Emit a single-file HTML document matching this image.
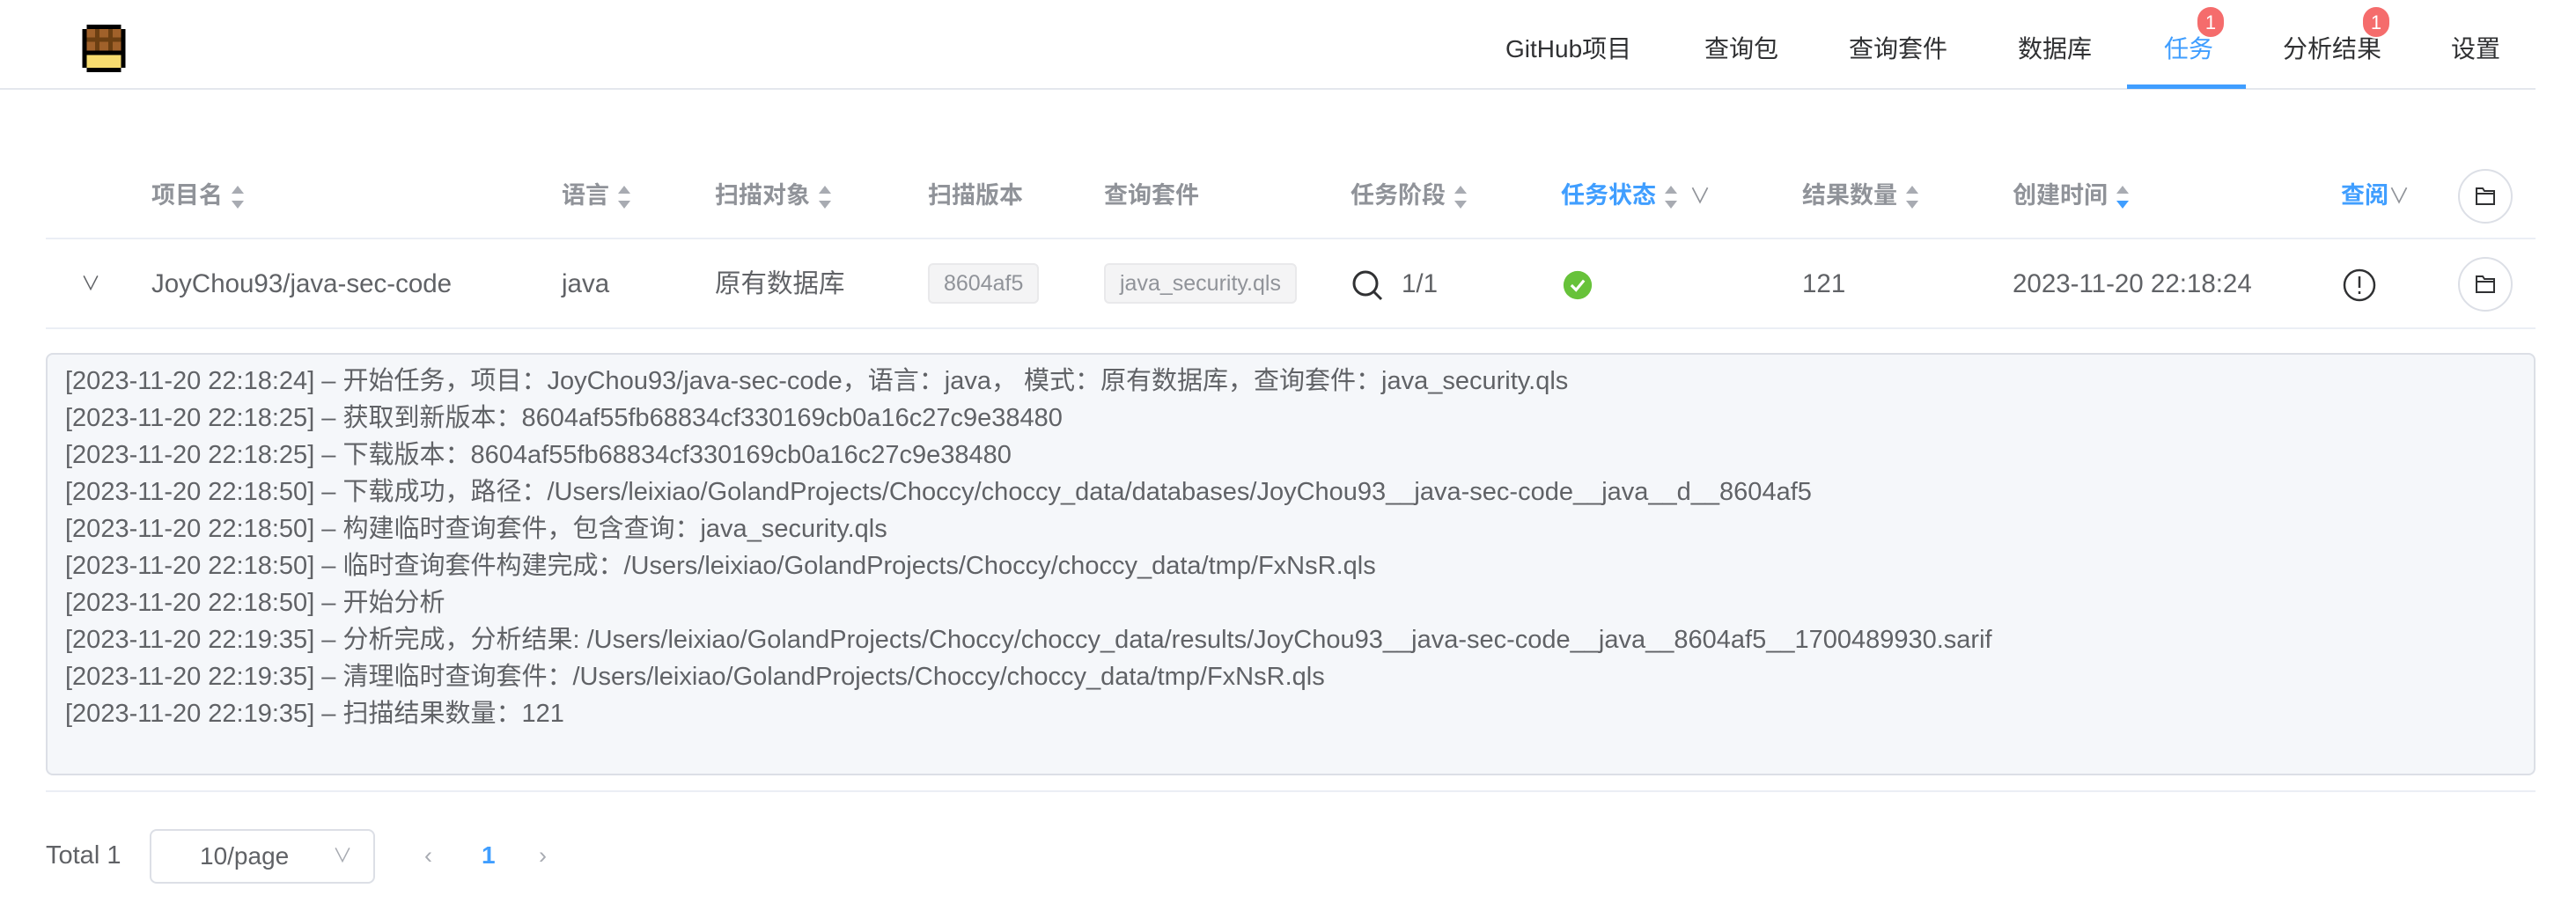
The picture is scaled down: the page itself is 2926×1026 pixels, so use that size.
<!DOCTYPE html>
<html><head><meta charset="utf-8"><style>
*{box-sizing:border-box;margin:0;padding:0}
body{width:2926px;height:1026px;background:#fff;font-family:"Liberation Sans","Noto Sans CJK SC",sans-serif;color:#606266;position:relative;overflow:hidden}
.a{position:absolute;white-space:nowrap}
.nav{top:36px;font-size:28px;color:#303133;line-height:40px}
.badge{position:absolute;background:#f56c6c;color:#fff;font-size:22px;height:38px;min-width:34px;border-radius:18px;text-align:center;line-height:36px;border:2px solid #fff}
.th{top:204px;font-size:27px;font-weight:bold;color:#909399;line-height:36px}
.td{top:305px;font-size:29.5px;color:#606266;line-height:36px}
.sort{display:inline-block;vertical-align:middle;margin-left:10px;width:14px;height:28px;position:relative}
.sort:before{content:"";position:absolute;left:0;top:1px;border:7px solid transparent;border-bottom:9px solid #a8abb2;border-top:0}
.sort:after{content:"";position:absolute;left:0;bottom:1px;border:7px solid transparent;border-top:9px solid #a8abb2;border-bottom:0}
.sort.down:after{border-top-color:#409eff}
.hl{position:absolute;height:2px;background:#ebeef5;left:52px;width:2828px}
.tag{position:absolute;top:299px;height:46px;background:#f4f4f5;border:2px solid #e9e9eb;border-radius:6px;color:#909399;font-size:25px;line-height:42px;padding:0 16px}
.fbtn{position:absolute;width:62px;height:62px;border:2px solid #dcdfe6;border-radius:50%;left:2792px}
.log{position:absolute;left:52px;top:401px;width:2828px;height:480px;background:#f5f7fa;border:2px solid #dcdfe6;border-radius:8px;padding:9px 20px;font-size:29px;line-height:42px;color:#606266;white-space:pre}
</style></head><body>
<svg class="a" style="left:93px;top:28px" width="50" height="54" viewBox="0 0 10 11" shape-rendering="crispEdges">
<rect x="1" y="0" width="8" height="11" fill="#000"/><rect x="0" y="1" width="10" height="9" fill="#000"/>
<rect x="1" y="1" width="8" height="5" fill="#6b3f12"/>
<rect x="1" y="1" width="2" height="2" fill="#a0612a"/><rect x="4" y="1" width="2" height="2" fill="#a0612a"/><rect x="7" y="1" width="2" height="2" fill="#a0612a"/>
<rect x="1" y="4" width="2" height="2" fill="#a0612a"/><rect x="4" y="4" width="2" height="2" fill="#a0612a"/><rect x="7" y="4" width="2" height="2" fill="#a0612a"/>
<rect x="1" y="7" width="8" height="3" fill="#f7dc6f"/></svg>
<div class="a nav" style="left:1710px">GitHub项目</div>
<div class="a nav" style="left:1936px">查询包</div>
<div class="a nav" style="left:2100px">查询套件</div>
<div class="a nav" style="left:2292px">数据库</div>
<div class="a nav" style="left:2458px;color:#409eff">任务</div>
<div class="a nav" style="left:2593px">分析结果</div>
<div class="a nav" style="left:2784px">设置</div>
<div class="badge" style="left:2494px;top:6px">1</div>
<div class="badge" style="left:2682px;top:6px">1</div>
<div class="a" style="left:0;top:100px;width:2880px;height:2px;background:#e4e7ed"></div>
<div class="a" style="left:2416px;top:96px;width:135px;height:5px;background:#409eff"></div>

<div class="a th" style="left:172px">项目名<span class="sort"></span></div>
<div class="a th" style="left:638px">语言<span class="sort"></span></div>
<div class="a th" style="left:812px">扫描对象<span class="sort"></span></div>
<div class="a th" style="left:1054px">扫描版本</div>
<div class="a th" style="left:1254px">查询套件</div>
<div class="a th" style="left:1534px">任务阶段<span class="sort"></span></div>
<div class="a th" style="left:1773px;color:#409eff">任务状态<span class="sort"></span><span style="font-weight:normal;color:#909399;margin-left:14px;font-size:24px">∨</span></div>
<div class="a th" style="left:2047px">结果数量<span class="sort"></span></div>
<div class="a th" style="left:2286px">创建时间<span class="sort down"></span></div>
<div class="a th" style="left:2659px;color:#409eff">查阅<span style="font-weight:normal;color:#909399;font-size:24px">∨</span></div>
<div class="fbtn" style="top:192px"></div>
<svg class="a" style="left:2810px;top:210px" width="26" height="26" viewBox="0 0 26 26" fill="none" stroke="#303133" stroke-width="2"><path d="M3 4h7l2 3h11v15H3z M3 10h20"/></svg>
<div class="hl" style="top:270px"></div>

<div class="a td" style="left:92px;color:#606266;font-size:22px">∨</div>
<div class="a td" style="left:172px">JoyChou93/java-sec-code</div>
<div class="a td" style="left:638px">java</div>
<div class="a td" style="left:812px">原有数据库</div>
<div class="tag" style="left:1054px">8604af5</div>
<div class="tag" style="left:1254px">java_security.qls</div>
<svg class="a" style="left:1534px;top:305px" width="38" height="38" viewBox="0 0 38 38" fill="none" stroke="#303133" stroke-width="3"><circle cx="17" cy="17" r="13"/><path d="M27 27l8 8"/></svg>
<div class="a td" style="left:1592px">1/1</div>
<svg class="a" style="left:1775px;top:307px" width="34" height="34" viewBox="0 0 38 38"><circle cx="19" cy="19" r="18" fill="#67c23a"/><path d="M11 19l6 6 10-12" stroke="#fff" stroke-width="3.5" fill="none"/></svg>
<div class="a td" style="left:2047px">121</div>
<div class="a td" style="left:2286px">2023-11-20 22:18:24</div>
<svg class="a" style="left:2660px;top:304px" width="40" height="40" viewBox="0 0 40 40" fill="none" stroke="#303133" stroke-width="2.5"><circle cx="20" cy="20" r="17"/><path d="M20 10v13M20 27v3"/></svg>
<div class="fbtn" style="top:292px"></div>
<svg class="a" style="left:2810px;top:310px" width="26" height="26" viewBox="0 0 26 26" fill="none" stroke="#303133" stroke-width="2"><path d="M3 4h7l2 3h11v15H3z M3 10h20"/></svg>
<div class="hl" style="top:372px"></div>

<div class="log">[2023-11-20 22:18:24] – 开始任务，项目：JoyChou93/java-sec-code，语言：java， 模式：原有数据库，查询套件：java_security.qls
[2023-11-20 22:18:25] – 获取到新版本：8604af55fb68834cf330169cb0a16c27c9e38480
[2023-11-20 22:18:25] – 下载版本：8604af55fb68834cf330169cb0a16c27c9e38480
[2023-11-20 22:18:50] – 下载成功，路径：/Users/leixiao/GolandProjects/Choccy/choccy_data/databases/JoyChou93__java-sec-code__java__d__8604af5
[2023-11-20 22:18:50] – 构建临时查询套件，包含查询：java_security.qls
[2023-11-20 22:18:50] – 临时查询套件构建完成：/Users/leixiao/GolandProjects/Choccy/choccy_data/tmp/FxNsR.qls
[2023-11-20 22:18:50] – 开始分析
[2023-11-20 22:19:35] – 分析完成，分析结果: /Users/leixiao/GolandProjects/Choccy/choccy_data/results/JoyChou93__java-sec-code__java__8604af5__1700489930.sarif
[2023-11-20 22:19:35] – 清理临时查询套件：/Users/leixiao/GolandProjects/Choccy/choccy_data/tmp/FxNsR.qls
[2023-11-20 22:19:35] – 扫描结果数量：121</div>
<div class="hl" style="top:898px"></div>

<div class="a" style="left:52px;top:954px;font-size:29px;line-height:36px">Total 1</div>
<div class="a" style="left:170px;top:942px;width:256px;height:62px;border:2px solid #dcdfe6;border-radius:8px;font-size:28px;line-height:58px;padding-left:55px">10/page<span style="position:absolute;left:206px;color:#a8abb2;font-size:22px">∨</span></div>
<div class="a" style="left:482px;top:954px;font-size:27px;color:#a8abb2;line-height:36px">‹</div>
<div class="a" style="left:547px;top:954px;font-size:28px;color:#409eff;font-weight:bold;line-height:36px">1</div>
<div class="a" style="left:612px;top:954px;font-size:27px;color:#a8abb2;line-height:36px">›</div>
</body></html>
